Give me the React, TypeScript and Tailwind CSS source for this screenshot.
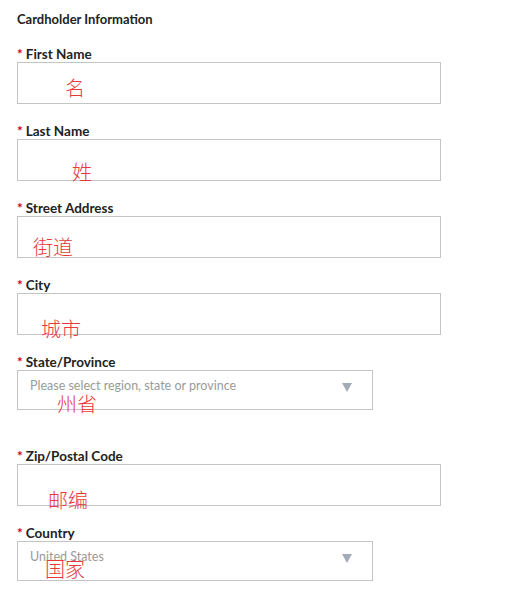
import type { ReactNode } from 'react';

const labelFont = { fontFamily: '"Lato", "Open Sans", "Liberation Sans", sans-serif' };

function Note({ text, className }: { text: string; className: string }) {
  return (
    <span
      className={`pointer-events-none absolute text-[20px] leading-[20px] text-[#e5393b] ${className}`}
      style={{ fontFamily: '"Noto Sans CJK SC", sans-serif', fontWeight: 300 }}
    >
      {text}
    </span>
  );
}

function Field({ label, children, className = '' }: { label: string; children: ReactNode; className?: string }) {
  return (
    <div className={className}>
      <div className="h-4 text-[13.5px] font-bold leading-4 text-[#222]" style={labelFont}>
        <span className="mr-[3px] text-[#d0021b]">*</span>
        {label}
      </div>
      {children}
    </div>
  );
}

function TextBox({ note }: { note: ReactNode }) {
  return <div className="relative h-[42px] w-[424px] border border-[#c4c4c4] bg-white">{note}</div>;
}

function SelectBox({ value, note }: { value: string; note: ReactNode }) {
  return (
    <div className="relative flex h-10 w-[356px] items-start justify-between border border-[#c4c4c4] bg-white pl-3 pr-5 pt-[7px]">
      <span className="text-[12.5px] leading-4 text-[#9a9a9a]" style={labelFont}>
        {value}
      </span>
      <svg width="10" height="9" viewBox="0 0 10 9" className="mt-[5px]">
        <path d="M0 0 H10 L5 9 Z" fill="#a3abb7" />
      </svg>
      {note}
    </div>
  );
}

export default function App() {
  return (
    <div className="min-h-[590px] w-[516px] bg-white pl-[17px] pt-[12px]">
      <div className="text-[13px] font-bold leading-[14px] text-[#222]" style={labelFont}>
        Cardholder Information
      </div>
      <div className="mt-[20px] flex flex-col gap-[19px]">
        <Field label="First Name">
          <TextBox note={<Note text="名" className="left-[47px] top-[15px]" />} />
        </Field>
        <Field label="Last Name">
          <TextBox note={<Note text="姓" className="left-[54px] top-[22px]" />} />
        </Field>
        <Field label="Street Address">
          <TextBox note={<Note text="街道" className="left-[15px] top-[20px]" />} />
        </Field>
        <Field label="City">
          <TextBox note={<Note text="城市" className="left-[23px] top-[25px]" />} />
        </Field>
        <Field label="State/Province" className="mb-[19px]">
          <SelectBox
            value="Please select region, state or province"
            note={<Note text="州省" className="left-[39px] top-[23px]" />}
          />
        </Field>
        <Field label="Zip/Postal Code">
          <TextBox note={<Note text="邮编" className="left-[30px] top-[25px]" />} />
        </Field>
        <Field label="Country">
          <SelectBox value="United States" note={<Note text="国家" className="left-[27px] top-[17px]" />} />
        </Field>
      </div>
    </div>
  );
}
